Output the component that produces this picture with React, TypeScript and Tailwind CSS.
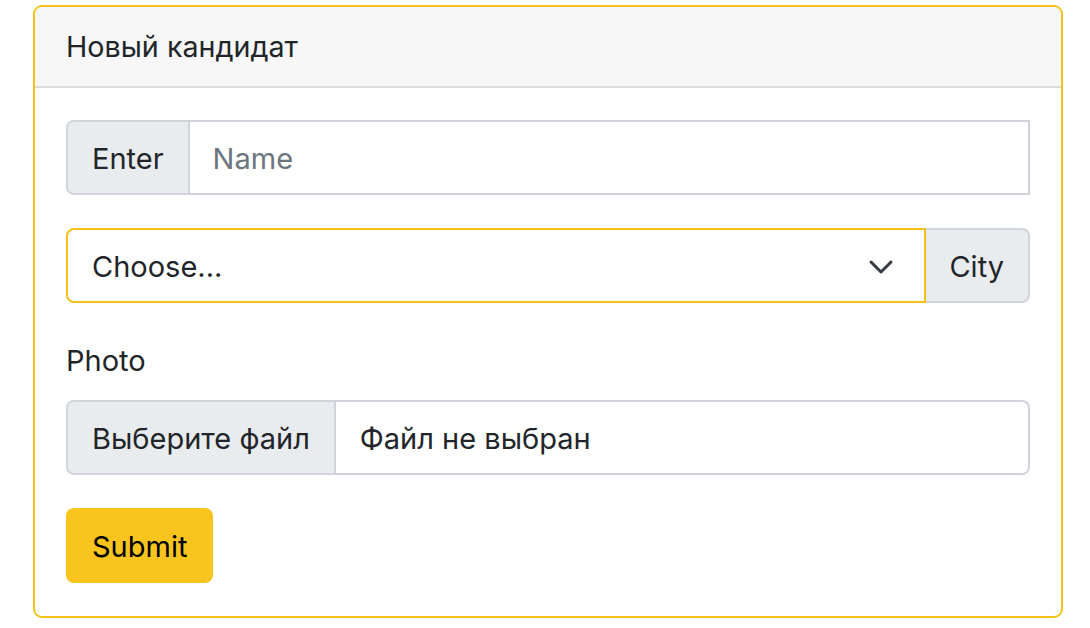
import React from 'react';

const App = () => {
  return (
    <div className="min-h-screen bg-white pt-[5px] pl-[33px] text-[#212529]" style={{ fontFamily: 'Inter, "Noto Sans", sans-serif' }}>
      <div className="w-[1030px] border-2 border-[#f5c118] rounded-[9px] overflow-hidden">
        {/* Header */}
        <div className="h-[81px] bg-[#f7f7f7] border-b-2 border-[#dcdcdc] px-[31px] pt-[1px] flex items-center text-[28.7px]">
          Новый кандидат
        </div>

        {/* Body */}
        <div className="px-[31px] pt-[32px] pb-[33px] flex flex-col">
          {/* Name */}
          <div className="flex h-[75px] text-[29px]">
            <div className="flex items-center pt-[2px] px-[24px] bg-[#e9ecef] border-2 border-[#d0d4da] rounded-l-[8px]">Enter</div>
            <div className="flex-1 flex items-center pt-[2px] px-[23px] border-2 border-l-0 border-[#d0d4da] text-[#6c757d]">Name</div>
          </div>

          {/* City select */}
          <div className="flex h-[75px] mt-[33px] text-[29px]">
            <div className="flex-1 flex items-center justify-between pt-[2px] pl-[24px] pr-[30px] border-2 border-[#f5c118] rounded-l-[8px]">
              <span>Choose...</span>
              <svg width="26" height="16" viewBox="0 0 26 16" fill="none">
                <path d="M3 3l10 10 10-10" stroke="#343a40" strokeWidth="3" strokeLinecap="round" strokeLinejoin="round" />
              </svg>
            </div>
            <div className="flex items-center pt-[2px] pl-[23px] pr-[24px] bg-[#e9ecef] border-2 border-l-0 border-[#d0d4da] rounded-r-[8px]">City</div>
          </div>

          {/* Photo */}
          <label className="mt-[33px] h-[48px] pt-[2px] flex items-center text-[29px]">Photo</label>
          <div className="flex h-[75px] mt-[16px] text-[29px]">
            <div className="flex items-center pt-[2px] px-[24px] bg-[#e9ecef] border-2 border-[#d0d4da] rounded-l-[8px]">Выберите файл</div>
            <div className="flex-1 flex items-center pt-[2px] px-[24px] border-2 border-l-0 border-[#d0d4da] rounded-r-[8px]">Файл не выбран</div>
          </div>

          {/* Submit */}
          <div className="mt-[33px]">
            <button className="h-[75px] pt-[2px] px-[26px] bg-[#f9c41e] rounded-[8px] text-[29px] text-black">Submit</button>
          </div>
        </div>
      </div>
    </div>
  );
};

export default App;
